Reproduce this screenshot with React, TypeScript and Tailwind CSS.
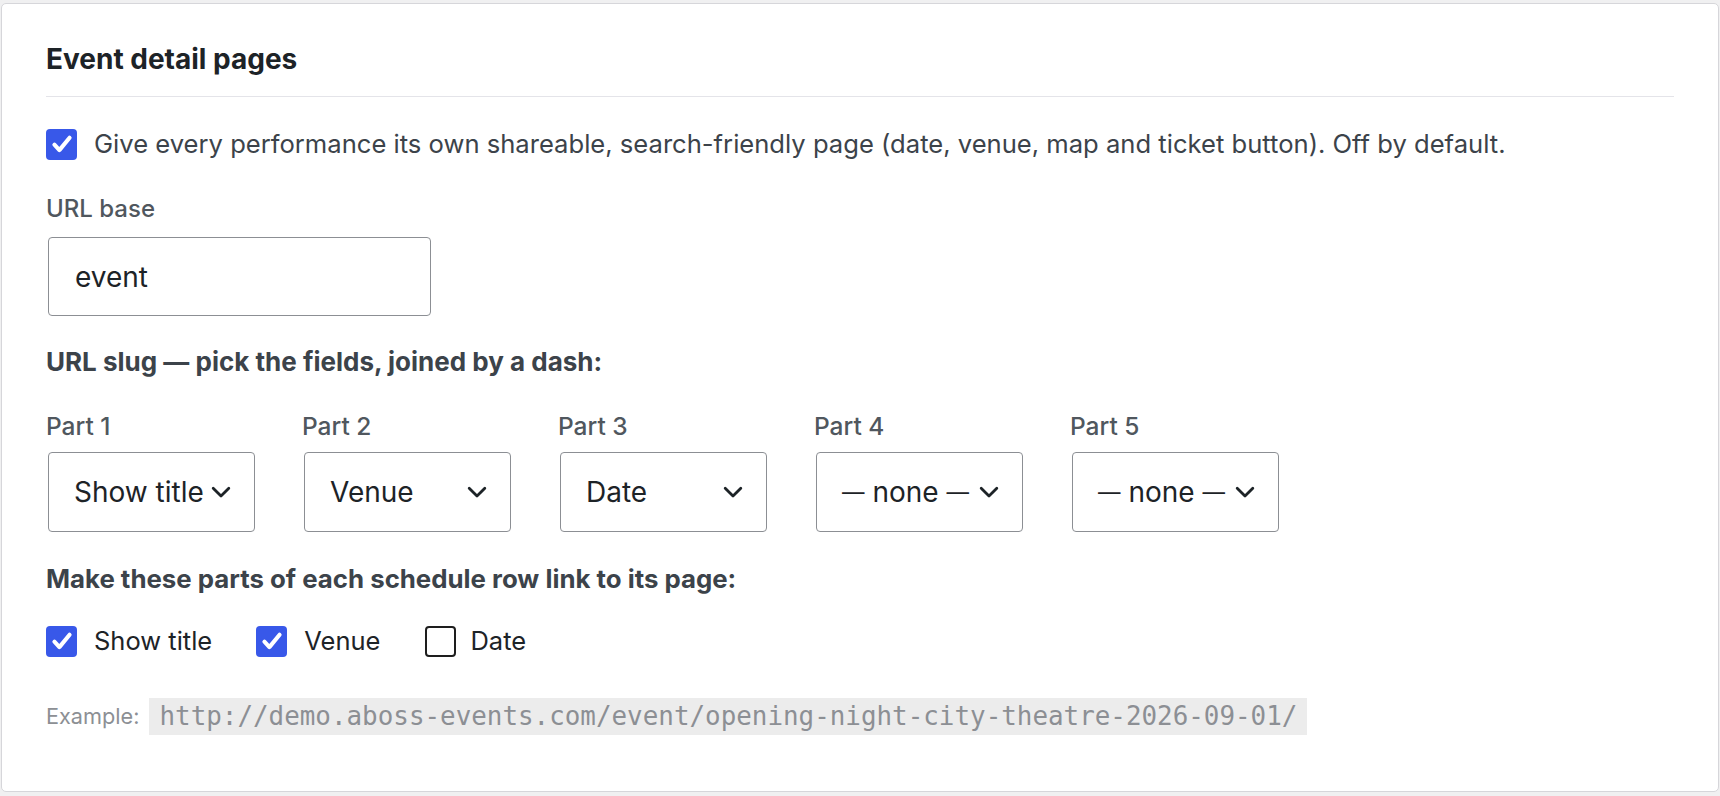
import React, { useState } from 'react';

const CheckBox: React.FC<{ checked: boolean; onToggle: () => void }> = ({ checked, onToggle }) => (
    <button
        type="button"
        onClick={onToggle}
        className={`flex h-[31px] w-[31px] shrink-0 items-center justify-center rounded-[4px] ${
            checked ? 'bg-[#3858e9]' : 'border-2 border-[#1e1e1e] bg-white'
        }`}
    >
        {checked && (
            <svg viewBox="0 0 24 24" className="h-[26px] w-[26px]" fill="none">
                <path d="M5 12.6l4.6 5L19 6.2" stroke="#fff" strokeWidth="3.8" strokeLinecap="round" strokeLinejoin="round" />
            </svg>
        )}
    </button>
);

const Chevron = () => (
    <svg viewBox="0 0 20 12" className="h-[12px] w-[20px] shrink-0" fill="none">
        <path d="M2.2 2.2L10 10l7.8-7.8" stroke="#1d2327" strokeWidth="2.8" strokeLinecap="round" strokeLinejoin="round" />
    </svg>
);

// em dashes in the select labels are a bit narrower than Inter's
const Dash = () => <span className="text-[22.5px] align-[2px]">—</span>;

const SelectLabel: React.FC<{ value: string }> = ({ value }) => {
    if (value === '— none —') {
        return (
            <span className="whitespace-nowrap">
                <Dash /> none <Dash />
            </span>
        );
    }
    return <span className="whitespace-nowrap">{value}</span>;
};

const parts = [
    { label: 'Part 1', value: 'Show title' },
    { label: 'Part 2', value: 'Venue' },
    { label: 'Part 3', value: 'Date' },
    { label: 'Part 4', value: '— none —' },
    { label: 'Part 5', value: '— none —' },
];

const EventDetailSettings: React.FC = () => {
    const [enabled, setEnabled] = useState(true);
    const [urlBase, setUrlBase] = useState('event');
    const [links, setLinks] = useState({ title: true, venue: true, date: false });

    const toggle = (key: 'title' | 'venue' | 'date') => setLinks({ ...links, [key]: !links[key] });

    return (
        <div className="min-h-screen bg-[#f0f0f1] px-[1px] pt-[3px] pb-[4px] font-['Inter',sans-serif]">
            <div className="h-[789px] rounded-[5px] border border-[#d6d6da] bg-white px-[44px] pt-[39px]">
                <h2 className="border-b border-[#e4e4e9] pb-[21px] text-[28px] font-bold leading-[32px] text-[#1d2327]">
                    Event detail pages
                </h2>

                <div className="mt-[31px] flex items-center gap-[17px]">
                    <CheckBox checked={enabled} onToggle={() => setEnabled(!enabled)} />
                    <span className="text-[25.6px] leading-[32px] text-[#3c434a]">
                        Give every performance its own shareable, search-friendly page (date, venue, map and ticket button). Off by default.
                    </span>
                </div>

                <label htmlFor="url-base" className="mt-[35px] block text-[24px] font-medium leading-[28px] text-[#50575e]">
                    URL base
                </label>
                <input
                    id="url-base"
                    value={urlBase}
                    onChange={(e) => setUrlBase(e.target.value)}
                    className="mt-[14px] ml-[2px] block h-[79px] w-[383px] rounded-[4px] border border-[#8c8f94] px-[26px] text-[28px] text-[#1d2327] outline-none"
                />

                <p className="mt-[32px] text-[26px] font-bold leading-[28px] text-[#3c434a]">
                    URL slug — pick the fields, joined by a dash:
                </p>

                <div className="mt-[36px] flex gap-[49px] pl-[2px]">
                    {parts.map((p) => (
                        <div key={p.label} className="w-[207px]">
                            <div className="-ml-[2px] text-[24.5px] font-medium leading-[28px] text-[#50575e]">{p.label}</div>
                            <div className="mt-[12px] flex h-[80px] items-center rounded-[4px] border border-[#8c8f94] pl-[25px] pr-[23px] text-[28px] text-[#1d2327]">
                                <SelectLabel value={p.value} />
                                <span className="ml-auto pl-[6px]">
                                    <Chevron />
                                </span>
                            </div>
                        </div>
                    ))}
                </div>

                <p className="mt-[33px] text-[25.8px] font-bold leading-[28px] text-[#3c434a]">
                    Make these parts of each schedule row link to its page:
                </p>

                <div className="mt-[32px] flex items-center">
                    <CheckBox checked={links.title} onToggle={() => toggle('title')} />
                    <span className="ml-[17px] text-[25.5px] leading-[32px] text-[#1d2327]">Show title</span>
                    <div className="ml-[44px]">
                        <CheckBox checked={links.venue} onToggle={() => toggle('venue')} />
                    </div>
                    <span className="ml-[17px] text-[25.5px] leading-[32px] text-[#1d2327]">Venue</span>
                    <div className="ml-[45px]">
                        <CheckBox checked={links.date} onToggle={() => toggle('date')} />
                    </div>
                    <span className="ml-[14px] text-[25.5px] leading-[32px] text-[#1d2327]">Date</span>
                </div>

                <div className="mt-[41px] flex items-center gap-[10px]">
                    <span className="text-[21.7px] text-[#8c8f94]">Example:</span>
                    <code className="h-[37px] bg-[#ececec] px-[10px] font-['DejaVu_Sans_Mono',monospace] text-[25.9px] leading-[37px] text-[#8c8f94]">
                        http://demo.aboss-events.com/{urlBase}/opening-night-city-theatre-2026-09-01/
                    </code>
                </div>
            </div>
        </div>
    );
};

export default function App() {
    return <EventDetailSettings />;
}
